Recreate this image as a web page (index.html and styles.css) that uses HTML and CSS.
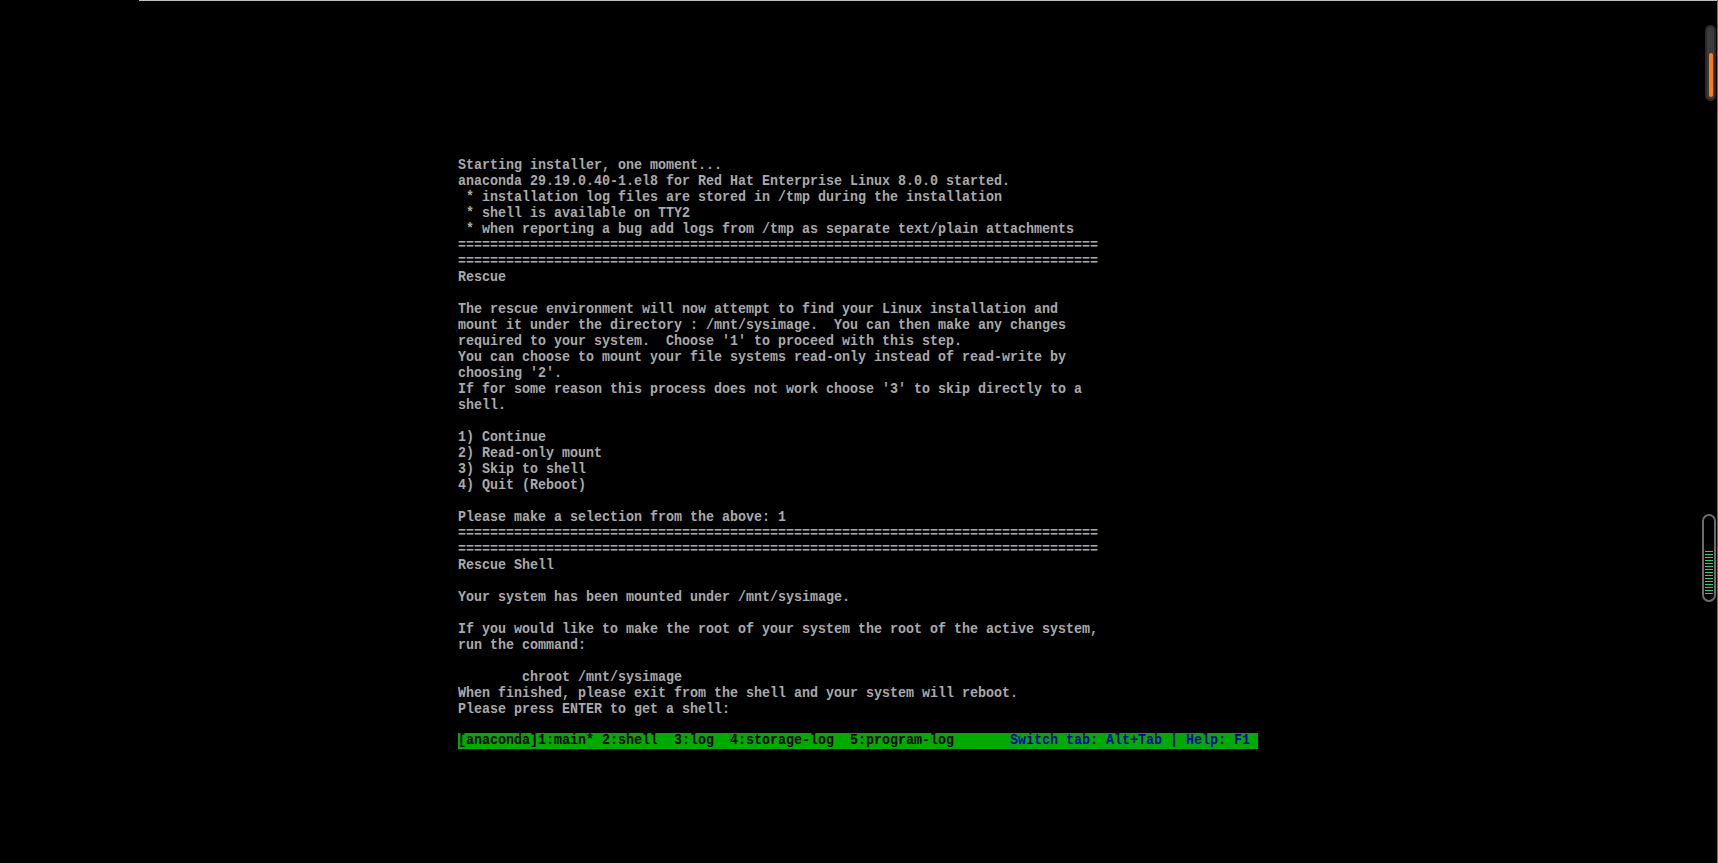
FILE: index.html
```html
<!DOCTYPE html>
<html lang="en">
<head>
    <meta charset="UTF-8">
    <meta name="viewport" content="width=device-width, initial-scale=1.0">
    <title>Rescue - Console</title>
    <link rel="stylesheet" href="styles.css">
</head>
<body>
    <div class="frame-top"></div>
    <div class="frame-right"></div>

    <div class="console">
        <pre class="screen">Starting installer, one moment...
anaconda 29.19.0.40-1.el8 for Red Hat Enterprise Linux 8.0.0 started.
 * installation log files are stored in /tmp during the installation
 * shell is available on TTY2
 * when reporting a bug add logs from /tmp as separate text/plain attachments
================================================================================
================================================================================
Rescue

The rescue environment will now attempt to find your Linux installation and
mount it under the directory : /mnt/sysimage.  You can then make any changes
required to your system.  Choose '1' to proceed with this step.
You can choose to mount your file systems read-only instead of read-write by
choosing '2'.
If for some reason this process does not work choose '3' to skip directly to a
shell.

1) Continue
2) Read-only mount
3) Skip to shell
4) Quit (Reboot)

Please make a selection from the above: 1
================================================================================
================================================================================
Rescue Shell

Your system has been mounted under /mnt/sysimage.

If you would like to make the root of your system the root of the active system,
run the command:

        chroot /mnt/sysimage
When finished, please exit from the shell and your system will reboot.
Please press ENTER to get a shell:
</pre>
        <div class="tmux-bar">
            <span class="tabs">[anaconda]1:main* 2:shell  3:log  4:storage-log  5:program-log</span>
            <span class="hint">Switch tab: Alt+Tab | Help: F1</span>
        </div>
    </div>

    <!-- floating meters on the right edge -->
    <div class="meter meter-top">
        <div class="meter-fill"></div>
    </div>
    <div class="meter meter-lines">
        <div class="meter-stripes"></div>
    </div>
</body>
</html>
```

FILE: styles.css
```css
html, body {
    margin: 0;
    padding: 0;
    background: #000;
    height: 100%;
    overflow: hidden;
}
body {
    position: relative;
}
.frame-top {
    position: absolute;
    top: 0;
    left: 139px;
    right: 0;
    height: 1px;
    background: #bdbdbd;
}
.frame-right {
    position: absolute;
    top: 0;
    right: 0;
    bottom: 0;
    width: 1px;
    background: #6e6e6e;
}
.console {
    padding-top: 157px;
    margin-left: 458px;
    width: 900px;
    transform: scaleX(0.88889);
    transform-origin: 0 0;
    font-family: "Liberation Mono", "DejaVu Sans Mono", monospace;
    font-size: 15px;
    font-weight: bold;
    line-height: 16px;
    color: #aaaaaa;
}
.screen {
    margin: 0;
    padding-top: 1px;
    font: inherit;
    white-space: pre;
}
.tmux-bar {
    margin-top: 15px;
    display: flex;
    justify-content: space-between;
    height: 16px;
    padding-right: 9px;
    background: #00aa00;
    white-space: pre;
}
.tabs {
    color: #000;
}
.hint {
    color: #0000aa;
}
.meter {
    position: absolute;
    box-sizing: border-box;
    border-radius: 7px;
}
.meter-top {
    top: 25px;
    left: 1705px;
    width: 11px;
    height: 76px;
    background: #3c3c3c;
    border: 2px solid #2a2a2a;
    display: flex;
    align-items: flex-end;
    justify-content: center;
    padding-bottom: 2px;
}
.meter-fill {
    width: 4px;
    height: 44px;
    border-radius: 2px;
    background: #ff7d12;
}
.meter-lines {
    top: 514px;
    left: 1702px;
    width: 14px;
    height: 88px;
    border: 2px solid #6c6c6c;
    display: flex;
    align-items: flex-end;
    justify-content: center;
    padding-bottom: 4px;
}
.meter-stripes {
    width: 8px;
    height: 45px;
    background: repeating-linear-gradient(to bottom, #2bd46a 0, #2bd46a 1px, transparent 1px, transparent 3px);
}
```
